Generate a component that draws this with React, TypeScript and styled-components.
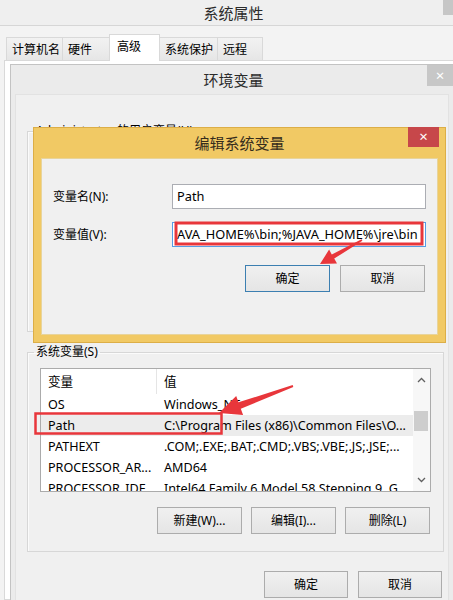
import styled, { createGlobalStyle } from 'styled-components';

const GlobalStyle = createGlobalStyle`
  html, body { margin: 0; padding: 0; }
  body {
    background: #f0f0f0;
    font-family: 'Noto Sans', 'Noto Sans CJK SC', sans-serif;
    font-size: 12px;
    color: #000;
    overflow: hidden;
  }
`;

const FONT = `'Noto Sans', 'Noto Sans CJK SC', sans-serif`;

type Row = { name: string; value: string; selected?: boolean };

const rows: Row[] = [
  { name: 'OS', value: 'Windows_NT' },
  { name: 'Path', value: 'C:\\Program Files (x86)\\Common Files\\O...', selected: true },
  { name: 'PATHEXT', value: '.COM;.EXE;.BAT;.CMD;.VBS;.VBE;.JS;.JSE;...' },
  { name: 'PROCESSOR_AR...', value: 'AMD64' },
  { name: 'PROCESSOR_IDE...', value: 'Intel64 Family 6 Model 58 Stepping 9, G...' },
];

const tabs = [
  { label: '计算机名', w: 57 },
  { label: '硬件', w: 48 },
  { label: '高级', w: 51, active: true },
  { label: '系统保护', w: 59 },
  { label: '远程', w: 46 },
];

// tapered arrow like the ones drawn by screenshot tools
const arrowPoints = (
  tx: number, ty: number, px: number, py: number,
  headLen: number, headHalf: number, tailHalf: number, neckHalf: number,
) => {
  const len = Math.hypot(px - tx, py - ty);
  const ux = (px - tx) / len;
  const uy = (py - ty) / len;
  const nx = -uy;
  const ny = ux;
  const bx = px - ux * headLen;
  const by = py - uy * headLen;
  const pts = [
    [tx + nx * tailHalf, ty + ny * tailHalf],
    [bx + nx * neckHalf, by + ny * neckHalf],
    [bx + nx * headHalf, by + ny * headHalf],
    [px, py],
    [bx - nx * headHalf, by - ny * headHalf],
    [bx - nx * neckHalf, by - ny * neckHalf],
    [tx - nx * tailHalf, ty - ny * tailHalf],
  ];
  return pts.map(p => p.map(v => v.toFixed(1)).join(',')).join(' ');
};

const Chevron = ({ up }: { up?: boolean }) => (
  <svg width="9" height="6" viewBox="0 0 9 6">
    <path d={up ? 'M1 5 L4.5 1.5 L8 5' : 'M1 1 L4.5 4.5 L8 1'} fill="none" stroke="#606060" strokeWidth="1.3" />
  </svg>
);

const App = () => {
  return (
    <Screen>
      <GlobalStyle />
      <SysWindow>
        <SysTitleBar>
          系统属性
          <SysCloseStub />
        </SysTitleBar>
        <TabStrip>
          {tabs.map(t => (
            <Tab key={t.label} $w={t.w} $active={t.active}>
              {t.label}
            </Tab>
          ))}
        </TabStrip>
        <TabPanel />
      </SysWindow>

      <EnvWindow>
        <EnvTitleBar>
          环境变量
          <EnvClose>×</EnvClose>
        </EnvTitleBar>
        <EnvClient>
          <GroupBox>
            <GroupLegend>Administrator 的用户变量(U)</GroupLegend>
            <UserArea />
          </GroupBox>
          <GroupBox $gap>
            <GroupLegend>系统变量(S)</GroupLegend>
            <ListView>
              <ListBody>
                <ListHeader>
                  <NameCell $head>变量</NameCell>
                  <ValueCell $head>值</ValueCell>
                </ListHeader>
                {rows.map(r => (
                  <ListRow key={r.name} $selected={r.selected}>
                    <NameCell>{r.name}</NameCell>
                    <ValueCell>{r.value}</ValueCell>
                  </ListRow>
                ))}
              </ListBody>
              <ScrollBar>
                <ScrollBtn>
                  <Chevron up />
                </ScrollBtn>
                <ScrollTrack>
                  <ScrollThumb />
                </ScrollTrack>
                <ScrollBtn>
                  <Chevron />
                </ScrollBtn>
              </ScrollBar>
            </ListView>
            <ButtonRow $top={15} $gap={9} $right={1}>
              <Button>新建(W)...</Button>
              <Button>编辑(I)...</Button>
              <Button>删除(L)</Button>
            </ButtonRow>
          </GroupBox>
          <ButtonRow $top={19} $gap={10} $right={2}>
            <Button $w={84}>确定</Button>
            <Button $w={84}>取消</Button>
          </ButtonRow>
        </EnvClient>
      </EnvWindow>

      <EditDialog>
        <DialogTitleBar>
          编辑系统变量
          <DialogClose>×</DialogClose>
        </DialogTitleBar>
        <DialogBody>
          <FieldRow>
            <FieldLabel>变量名(N):</FieldLabel>
            <FieldBox>Path</FieldBox>
          </FieldRow>
          <FieldRow $top={13}>
            <FieldLabel>变量值(V):</FieldLabel>
            <FieldBox $focused>AVA_HOME%\bin;%JAVA_HOME%\jre\bin</FieldBox>
          </FieldRow>
          <ButtonRow $top={18} $gap={10} $right={1}>
            <Button $primary>确定</Button>
            <Button>取消</Button>
          </ButtonRow>
        </DialogBody>
      </EditDialog>

      <Marks viewBox="0 0 453 600">
        <rect x="176" y="223" width="246" height="21" fill="none" stroke="#e8363b" strokeWidth="3" />
        <rect x="35.5" y="413.5" width="186" height="20" fill="none" stroke="#e8363b" strokeWidth="2.5" />
        <polygon points={arrowPoints(362, 240, 320, 264, 15, 8, 0.8, 2.4)} fill="#e8363b" />
        <polygon points={arrowPoints(293, 386, 219, 413, 22, 10, 1, 3.4)} fill="#e8363b" />
      </Marks>
    </Screen>
  );
};

export default App;

const Screen = styled.div`
  position: relative;
  width: 453px;
  height: 600px;
  overflow: hidden;
  background: #f0f0f0;
`;

const SysWindow = styled.div`
  width: 467px;
  height: 600px;
  display: flex;
  flex-direction: column;
  background: #f3f3f3;
`;

const SysTitleBar = styled.div`
  position: relative;
  height: 25px;
  border-bottom: 1px solid #d6d6d6;
  display: flex;
  align-items: center;
  justify-content: center;
  font-family: ${FONT};
  font-size: 15px;
  line-height: 20px;
  color: #2b2b2b;
  background: #efefef;
`;

const SysCloseStub = styled.div`
  position: absolute;
  top: 0;
  right: 0;
  width: 24px;
  height: 15px;
  background: #c6c6c6;
`;

const TabStrip = styled.div`
  display: flex;
  align-items: flex-end;
  height: 34px;
  padding-left: 6px;
`;

const Tab = styled.div<{ $w: number; $active?: boolean }>`
  position: relative;
  z-index: ${p => (p.$active ? 1 : 0)};
  box-sizing: border-box;
  width: ${p => p.$w}px;
  height: ${p => (p.$active ? 27 : 23)}px;
  margin-bottom: ${p => (p.$active ? -1 : 0)}px;
  margin-left: -1px;
  padding: ${p => (p.$active ? '0 0 2px 7px' : '1px 0 0 5px')};
  display: flex;
  align-items: center;
  border: 1px solid #d9d9d9;
  border-bottom: none;
  background: ${p => (p.$active ? '#fff' : 'linear-gradient(#f2f2f2, #e6e6e6)')};
  font-size: 12px;
  line-height: 16px;
  &:first-child { margin-left: 0; }
`;

const TabPanel = styled.div`
  flex: 1;
  margin-left: 4px;
  border: 1px solid #d9d9d9;
  background: #fff;
`;

const EnvWindow = styled.div`
  position: absolute;
  left: 10px;
  top: 64px;
  width: 447px;
  height: 560px;
  box-sizing: border-box;
  border: 1px solid #c3c3c3;
  background: #ebebeb;
  display: flex;
  flex-direction: column;
`;

const EnvTitleBar = styled.div`
  position: relative;
  height: 29px;
  display: flex;
  align-items: center;
  justify-content: center;
  font-size: 15px;
  line-height: 20px;
  color: #2b2b2b;
`;

const EnvClose = styled.div`
  position: absolute;
  top: 0;
  right: 3px;
  width: 26px;
  height: 21px;
  background: #c7c7c7;
  color: #fff;
  font-size: 15px;
  line-height: 20px;
  text-align: center;
`;

const EnvClient = styled.div`
  flex: 1;
  margin: 0 7px 0 4px;
  border: 1px solid #e2e2e2;
  background: #f0f0f0;
  padding: 26px 4px 0 11px;
  display: flex;
  flex-direction: column;
`;

const GroupBox = styled.fieldset<{ $gap?: boolean }>`
  margin: ${p => (p.$gap ? 10 : 0)}px 0 0 0;
  padding: 6px 12px 17px 12px;
  min-width: 0;
  border: 1px solid #d7d7d7;
  box-shadow: inset 1px 1px 0 #fbfbfb;
`;

const GroupLegend = styled.legend`
  margin-left: -6px;
  padding: 0 2px;
  font-size: 12px;
  line-height: 20px;
  white-space: nowrap;
`;

const UserArea = styled.div`
  height: 167px;
`;

const ListView = styled.div`
  display: flex;
  height: 124px;
  box-sizing: border-box;
  border: 1px solid #ababab;
  background: #fff;
`;

const ListBody = styled.div`
  flex: 1;
  min-width: 0;
  overflow: hidden;
`;

const ListHeader = styled.div`
  display: flex;
  height: 25px;
  align-items: center;
`;

const ListRow = styled.div<{ $selected?: boolean }>`
  display: flex;
  height: 21px;
  align-items: center;
  background: ${p => (p.$selected ? '#ececec' : '#fff')};
`;

const NameCell = styled.div<{ $head?: boolean }>`
  box-sizing: border-box;
  width: 116px;
  height: 100%;
  padding-left: 7px;
  display: flex;
  align-items: center;
  white-space: nowrap;
  overflow: hidden;
  border-right: ${p => (p.$head ? '1px solid #e5e5e5' : 'none')};
  font-size: 12.6px;
  line-height: 16px;
`;

const ValueCell = styled.div<{ $head?: boolean }>`
  flex: 1;
  padding-left: 7px;
  white-space: nowrap;
  overflow: hidden;
  font-size: 12.6px;
  line-height: 16px;
`;

const ScrollBar = styled.div`
  width: 17px;
  display: flex;
  flex-direction: column;
  background: #f7f7f7;
`;

const ScrollBtn = styled.div`
  height: 22px;
  display: flex;
  align-items: center;
  justify-content: center;
`;

const ScrollTrack = styled.div`
  flex: 1;
  padding: 20px 2px 0 1px;
`;

const ScrollThumb = styled.div`
  height: 20px;
  background: #cdcdcd;
`;

const ButtonRow = styled.div<{ $top: number; $gap: number; $right: number }>`
  display: flex;
  justify-content: flex-end;
  gap: ${p => p.$gap}px;
  margin-top: ${p => p.$top}px;
  padding-right: ${p => p.$right}px;
`;

const Button = styled.button<{ $primary?: boolean; $w?: number }>`
  width: ${p => p.$w ?? 85}px;
  height: 27px;
  box-sizing: border-box;
  padding: 0;
  border: 1px solid ${p => (p.$primary ? '#3c7fb1' : '#acacac')};
  background: linear-gradient(#f0f0f0, #e5e5e5);
  font-family: ${FONT};
  font-size: 12px;
  line-height: 16px;
  color: #000;
`;

const EditDialog = styled.div`
  position: absolute;
  left: 33px;
  top: 127px;
  width: 413px;
  height: 216px;
  box-sizing: border-box;
  border: 1px solid #dcae47;
  background: #f1c964;
  display: flex;
  flex-direction: column;
`;

const DialogTitleBar = styled.div`
  position: relative;
  height: 30px;
  display: flex;
  align-items: center;
  justify-content: center;
  font-size: 15px;
  line-height: 20px;
  color: #352c1c;
`;

const DialogClose = styled.div`
  position: absolute;
  top: -1px;
  right: 6px;
  width: 31px;
  height: 20px;
  background: #c7474a;
  color: #fff;
  font-size: 15px;
  line-height: 19px;
  text-align: center;
`;

const DialogBody = styled.div`
  flex: 1;
  margin: 0 7px 7px 7px;
  border: 1px solid #e8d49b;
  background: #f0f0f0;
  padding: 25px 11px 0 11px;
  display: flex;
  flex-direction: column;
`;

const FieldRow = styled.div<{ $top?: number }>`
  display: flex;
  align-items: center;
  height: 25px;
  margin-top: ${p => p.$top ?? 0}px;
`;

const FieldLabel = styled.div`
  width: 119px;
  font-size: 12px;
  line-height: 16px;
`;

const FieldBox = styled.div<{ $focused?: boolean }>`
  flex: 1;
  min-width: 0;
  height: 25px;
  box-sizing: border-box;
  border: 1px solid ${p => (p.$focused ? '#569de5' : '#abadb3')};
  background: #fff;
  padding: 0 4px;
  overflow: hidden;
  white-space: nowrap;
  font-size: 12.8px;
  line-height: 23px;
`;

const Marks = styled.svg`
  position: absolute;
  left: 0;
  top: 0;
  width: 453px;
  height: 600px;
  pointer-events: none;
`;
